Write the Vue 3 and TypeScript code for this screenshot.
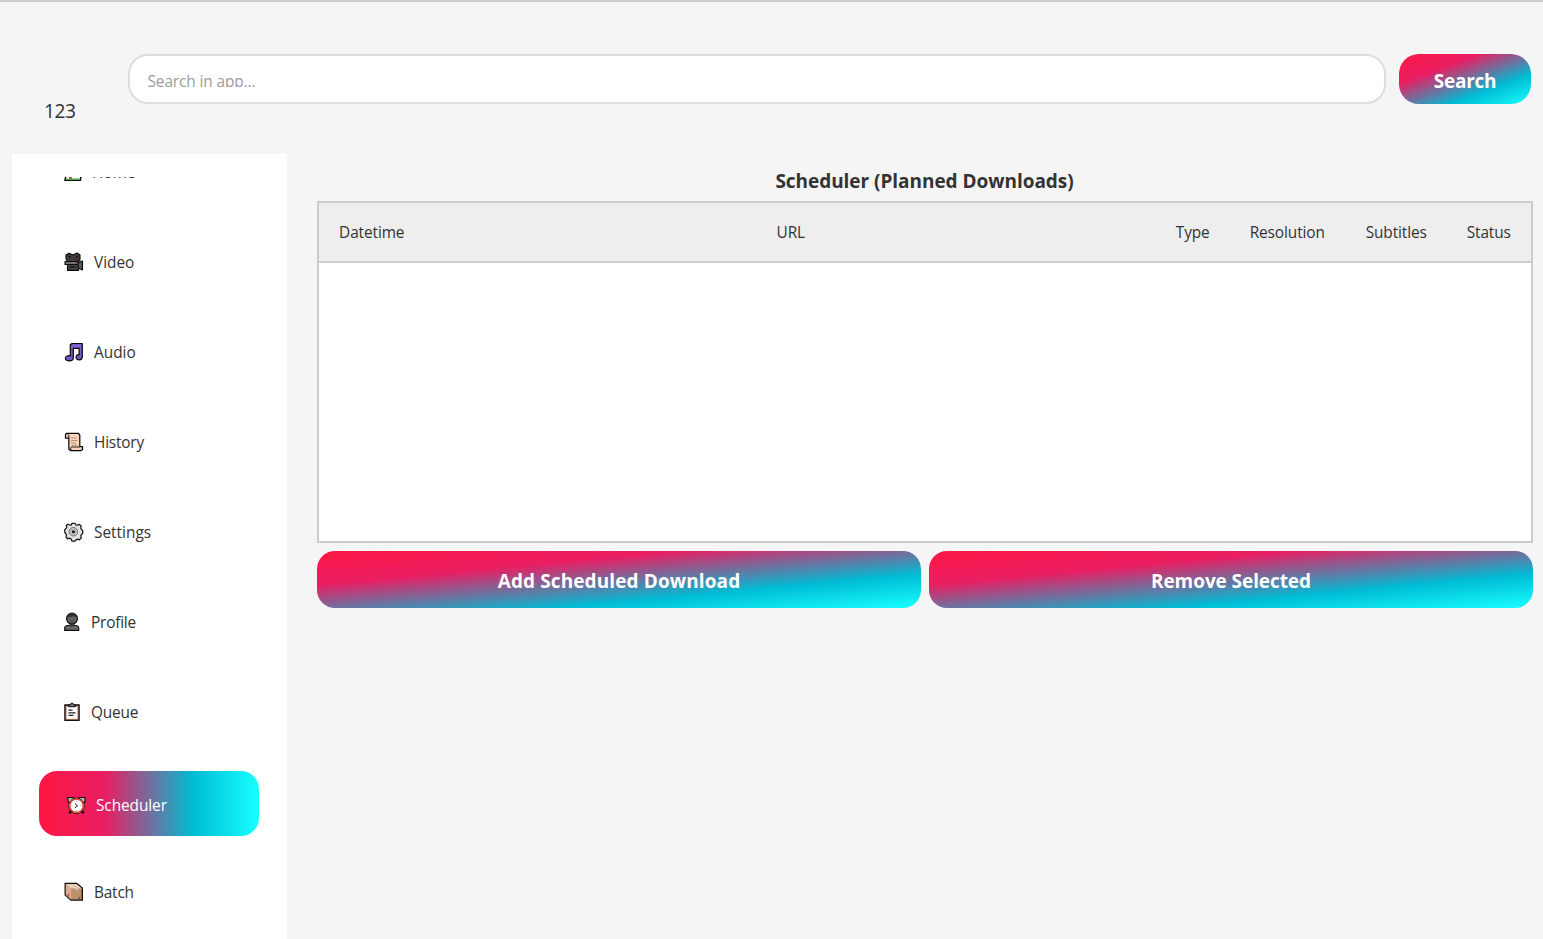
<script setup lang="ts">
import { ref } from 'vue'

interface NavItem {
  id: string
  label: string
  narrow?: boolean
}

const items: NavItem[] = [
  { id: 'home', label: 'Home' },
  { id: 'video', label: 'Video' },
  { id: 'audio', label: 'Audio' },
  { id: 'history', label: 'History' },
  { id: 'settings', label: 'Settings' },
  { id: 'profile', label: 'Profile', narrow: true },
  { id: 'queue', label: 'Queue', narrow: true },
  { id: 'scheduler', label: 'Scheduler' },
  { id: 'batch', label: 'Batch' },
]
const active = ref('scheduler')
const columns: string[] = ['Datetime', 'URL', 'Type', 'Resolution', 'Subtitles', 'Status']
</script>

<template>
  <div class="window">
    <header class="topbar">
      <div class="logo">123</div>
      <div class="search-field"><span class="placeholder">Search in app...</span></div>
      <button class="btn search-btn"><span>Search</span></button>
    </header>
    <div class="body">
      <aside class="sidebar">
        <nav class="list">
          <div
            v-for="item in items"
            :key="item.id"
            class="item"
            :class="[item.id, { active: item.id === active, narrow: item.narrow }]"
            @click="active = item.id"
          >
            <svg class="icon" viewBox="0 0 20 20" width="20" height="20">
              <g v-if="item.id === 'home'">
                <path d="M1 9 9 2l8 7v6l-.6 4.2H1L2 14z" fill="#fff" stroke="#111" stroke-width="1.5" />
                <path d="M5 14h3v4H5z" fill="#f04a2e" />
                <path d="M2 18h14" stroke="#30b52c" stroke-width="1" />
              </g>
              <g v-else-if="item.id === 'video'" stroke="#0b0b0b" stroke-width="1.1" stroke-linejoin="round">
                <path d="M2 3 5 1.3 9 3l4-2 3 2v5l-2 2H4L2 7z" fill="#3d3d3f" />
                <path d="M3.5 12h11v6.4h-11z" fill="#444" />
                <path d="M1 9.5h12v3H1z" fill="#727478" />
                <path d="m14 11 4.5-2v9L14 16z" fill="#55575b" />
                <path d="M5.5 15h6M5 4.7h2M12 4.7h2" stroke="#17181a" stroke-width="1.4" />
                <circle cx="12.5" cy="11.3" r=".8" fill="#e44" stroke="none" />
              </g>
              <g v-else-if="item.id === 'audio'" stroke="#080808" stroke-width="1.2" stroke-linejoin="round">
                <path d="M6.3 2.8 8 1.5h10.3v13.2c0 4-6.2 4.2-6.2.6 0-2.3 1.8-3 3-2.6V6.3H9.3v10c0 3.3-7.9 3.5-7.9.2 0-2.5 3-3.3 4.9-2.5z" fill="#7458ca" />
                <path d="M7.6 4h9.4" stroke="#8468d6" stroke-width="1.8" />
              </g>
              <g v-else-if="item.id === 'history'" stroke="#0b0b0b" stroke-width="1.25" stroke-linejoin="round">
                <path d="M2.4 1.4h12.2l1.2 2v11.3h2.7v2.8l-1.3 1H6.5L4.8 17V6H1.5V2.6z" fill="#f6d3bd" />
                <path d="M4.8 6V3.2L3.4 2M7 15h8.5M6.6 15.5 7 18" fill="none" stroke-width=".9" />
                <path d="M7 6h5.5M7 8.5h6.5M7 11h5M8 13.2h5.5" stroke="#c68d6c" stroke-width="1" />
              </g>
              <g v-else-if="item.id === 'settings'">
                <path d="m7.2 3 .8-1.7h3L12 3l1.5.2 1.9-.8 1.8 1.8-.5 2 .8 1.3 1.2 1v3l-1.2 1-.7 1.4.5 2-1.8 1.9-2-.6-1.5.6-1 1.4H8L7 16.8l-1.3-.6-2 .6L2 15l.5-2-.8-1.4L.8 10.5v-3l1.3-1 .6-1.3-.4-1.7 1.5-1.3 2 .8z" fill="#e2e2e2" stroke="#151515" stroke-width="1.25" stroke-linejoin="round" />
                <circle cx="9.4" cy="9.7" r="4.3" fill="#c9c9c9" stroke="#666" stroke-width=".9" />
                <circle cx="9.4" cy="9.7" r="2.5" fill="#ddd" stroke="#888" stroke-width=".6" />
                <circle cx="9.4" cy="9.7" r="1.5" fill="#111" />
              </g>
              <g v-else-if="item.id === 'profile'">
                <path d="M.7 18.4v-2.5q.4-2.2 3-2.4h8q2.6.2 3 2.4v2.5z" fill="#6a6a6a" stroke="#101010" stroke-width="1.2" />
                <path d="M6 10.5h4v3.2q-2 1.5-4 0z" fill="#555" stroke="#222" stroke-width=".8" />
                <ellipse cx="8" cy="6.6" rx="5.4" ry="5.5" fill="#666" stroke="#111" stroke-width="1.2" />
                <path d="M2.8 6Q3 1.2 8 1.2T13.2 6L10.5 4.5 5.2 5z" fill="#303030" />
                <path d="M5.8 7.2h1M9.5 7.2h1M6.5 9.4h3" stroke="#333" stroke-width=".8" />
              </g>
              <g v-else-if="item.id === 'queue'">
                <path d="M.9 3h14.2v15.3H.9z" fill="#b98868" stroke="#111" stroke-width="1.3" />
                <path d="M2.6 4.5h10.8v12.3H2.6z" fill="#fff" />
                <path d="M4.5 4.7V2.8h2Q6.5 1 8 1t1.5 1.8h2v1.9z" fill="#777" stroke="#111" stroke-width="1" />
                <path d="M4.5 8.2h4M4.5 10.8h7M4.5 13.4h5" stroke="#222" stroke-width="1.3" />
              </g>
              <g v-else-if="item.id === 'scheduler'">
                <path d="m2.2 17.2 3-3M16.8 17.2l-3-3" stroke="#111" stroke-width="2.5" />
                <path d="M1 1.5h5.5L7 4 3.5 7 1 6zM12.5 1.5H18V6l-2.5 1L12 4z" fill="#bbb" stroke="#111" stroke-width="1.2" />
                <circle cx="9.5" cy="9.8" r="7.8" fill="#fff" stroke="#17100e" stroke-width="1" />
                <circle cx="9.5" cy="9.8" r="6.7" fill="#fff" stroke="#e64327" stroke-width="1.4" />
                <path d="m8 7.6 2.6 2.2L7.8 12" fill="none" stroke="#222" stroke-width="1" />
                <path d="M9.5 4.6v1M9.5 14v1M4.5 9.8h1M13.5 9.8h1" stroke="#888" stroke-width=".8" />
              </g>
              <g v-else>
                <path d="M1.2 1.5h11.5L18.3 6v12.2H7L1.2 13z" fill="#bd926b" stroke="#0c0c0c" stroke-width="1.3" />
                <path d="M1.8 2.1 7 6.5v11L1.8 12.7z" fill="#d9b08f" />
                <path d="M1.8 2.1h10.6l5.3 4.4H7z" fill="#f0cdb4" />
                <path d="m7.3 2 4.4 4.5v2h2v-2L9.3 2z" fill="#ccc9bd" />
                <path d="M3.6 11.5h1.6v3H3.6z" fill="#e54850" />
                <path d="M14 16h2.2" stroke="#443327" />
              </g>
            </svg>
            <span class="label">{{ item.label }}</span>
          </div>
        </nav>
      </aside>
      <main class="content">
        <h1 class="title"><span>Scheduler (Planned Downloads)</span></h1>
        <section class="table">
          <div class="thead">
            <div v-for="c in columns" :key="c" class="th" :class="c.toLowerCase()"><span>{{ c }}</span></div>
          </div>
        </section>
        <div class="actions">
          <button class="btn"><span class="add">Add Scheduled Download</span></button>
          <button class="btn"><span class="remove">Remove Selected</span></button>
        </div>
      </main>
    </div>
  </div>
</template>

<style>
body {
  background: #f5f5f5;
  overflow: hidden;
}
</style>

<style scoped>
* {
  box-sizing: border-box;
}
.window {
  width: 1543px;
  height: 939px;
  overflow: hidden;
  background: #f5f5f5;
  border-top: 2px solid #ccc;
  color: #333;
  font: 15.4px/20px "Open Sans", "Noto Sans", sans-serif;
  display: flex;
  flex-direction: column;
}
.topbar {
  height: 152px;
  flex: none;
  display: flex;
  padding: 52px 12px 0 12px;
}
.logo {
  width: 116px;
  padding: 44px 0 0 32px;
  font-size: 19.2px;
  line-height: 25px;
  letter-spacing: -0.5px;
}
.search-field {
  width: 1258px;
  height: 50px;
  border: 2px solid #ddd;
  border-radius: 20px;
  background: #fff;
  padding: 15px 17.5px;
}
.placeholder {
  display: block;
  height: 16px;
  overflow: hidden;
  line-height: 22px;
  color: #9c9c9c;
  letter-spacing: -0.1px;
}
.btn {
  border: 0;
  padding: 2px 0 0;
  color: #fff;
  font: 700 19px/24px "Open Sans", "Noto Sans", sans-serif;
  border-radius: 18px;
  background: linear-gradient(to bottom right, #ff1744, #e91e63 30%, #00bcd4 70%, #18ffff);
}
.add {
  letter-spacing: 0.11px;
}
.remove {
  letter-spacing: -0.08px;
}
.search-btn {
  width: 132px;
  height: 50px;
  margin-left: 13px;
  padding-top: 4px;
  border-radius: 20px;
  letter-spacing: -0.3px;
}
.body {
  flex: 1;
  min-height: 0;
  display: flex;
  padding-left: 12px;
}
.sidebar {
  width: 275px;
  background: #fff;
  padding: 23px 28px 0 27px;
}
.list {
  height: 762px;
  overflow: hidden;
}
.item {
  height: 65px;
  margin: 0 0 25px;
  display: flex;
  align-items: center;
  padding: 0 0 1px 25px;
}
.item:first-child {
  margin-top: -36.5px;
  padding-bottom: 2px;
}
.icon {
  flex: none;
  margin: 0 10px 1.5px 0;
}
.narrow .icon {
  margin-right: 7px;
}
.home .icon {
  margin-right: 8px;
}
.active {
  color: #fff;
  border-radius: 18px;
  padding: 6px 0 0 27.5px;
  background: linear-gradient(90deg, #ff1744, #e91e63 30%, #00bcd4 70%, #18ffff);
}
.active .icon {
  margin: 0 9.5px 0 0;
}
.home .label {
  padding-top: 1.8px;
}
.narrow .label,
.history .label,
.batch .label {
  letter-spacing: -0.2px;
}
.scheduler .label {
  letter-spacing: -0.08px;
}
.content {
  width: 1216px;
  margin-left: 30px;
}
.title {
  margin: 0;
  height: 47px;
  padding: 15px 1px 0 0;
  text-align: center;
  font-size: 19px;
  line-height: 24px;
  letter-spacing: -0.04px;
}
.table {
  height: 342px;
  border: 2px solid #ccc;
  background: #fff;
}
.thead {
  height: 60px;
  background: #eee;
  display: grid;
  grid-template-columns: 107px 731px 73px 116px 102px 1fr;
}
.th {
  display: flex;
  align-items: center;
  justify-content: center;
  letter-spacing: -0.1px;
  padding: 2px 1.5px 0 0;
  border-bottom: 2px solid #ccc;
  position: relative;
}
.th:not(.type, .status)::after {
  content: "";
  position: absolute;
  right: 0;
  bottom: -2px;
  width: 1px;
  height: 2px;
  background: #ddd;
}
.actions {
  display: grid;
  grid-template-columns: 1fr 1fr;
  gap: 8px;
  margin-top: 8px;
  height: 57px;
}
</style>
